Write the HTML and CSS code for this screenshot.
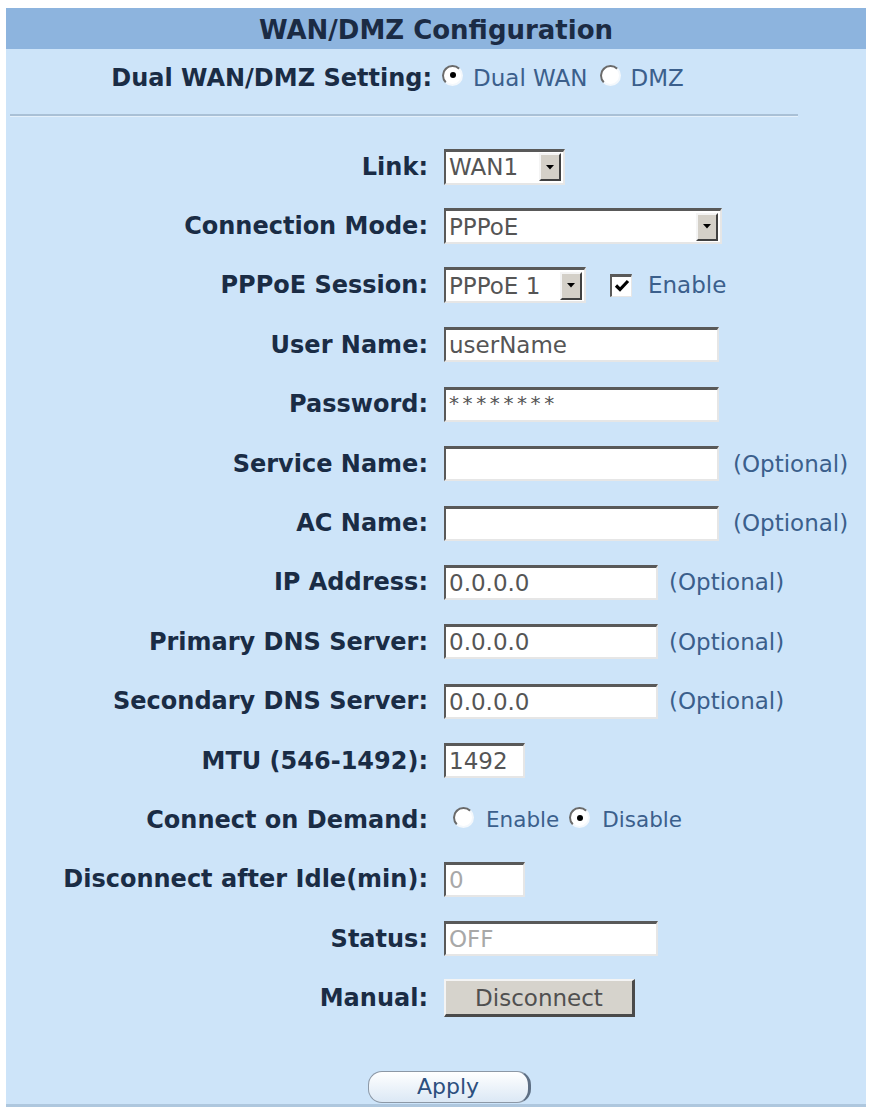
FILE: index.html
```html
<!DOCTYPE html>
<html>
<head>
<meta charset="utf-8">
<link rel="stylesheet" href="styles.css">
</head>
<body>
<div class="panel">
  <div class="title">WAN/DMZ Configuration</div>
  <div class="setting">
    <span class="slabel">Dual WAN/DMZ Setting:</span>
    <span class="radio checked"></span><span class="val">Dual WAN</span>
    <span class="radio"></span><span class="val">DMZ</span>
  </div>
  <div class="sep"></div>
  <div class="form">
    <div class="row"><div class="label">Link:</div><div class="ctrl">
      <div class="select w-link"><span class="stext">WAN1</span><span class="arrow"><svg width="8" height="5" viewBox="0 0 8 5"><path d="M0 0H8L4 4.5Z" fill="#000"/></svg></span></div>
    </div></div>
    <div class="row"><div class="label">Connection Mode:</div><div class="ctrl">
      <div class="select w-mode"><span class="stext">PPPoE</span><span class="arrow"><svg width="8" height="5" viewBox="0 0 8 5"><path d="M0 0H8L4 4.5Z" fill="#000"/></svg></span></div>
    </div></div>
    <div class="row"><div class="label">PPPoE Session:</div><div class="ctrl">
      <div class="select w-sess"><span class="stext">PPPoE 1</span><span class="arrow"><svg width="8" height="5" viewBox="0 0 8 5"><path d="M0 0H8L4 4.5Z" fill="#000"/></svg></span></div>
      <span class="check"><svg width="16" height="14" viewBox="0 0 16 14"><path d="M2 6.5L6 10.5L14 2" stroke="#000" stroke-width="3.2" fill="none"/></svg></span>
      <span class="val">Enable</span>
    </div></div>
    <div class="row"><div class="label">User Name:</div><div class="ctrl"><div class="input w-long">userName</div></div></div>
    <div class="row"><div class="label">Password:</div><div class="ctrl"><div class="input w-long pw">********</div></div></div>
    <div class="row"><div class="label">Service Name:</div><div class="ctrl"><div class="input w-long"></div><span class="val opt">(Optional)</span></div></div>
    <div class="row"><div class="label">AC Name:</div><div class="ctrl"><div class="input w-long"></div><span class="val opt">(Optional)</span></div></div>
    <div class="row"><div class="label">IP Address:</div><div class="ctrl"><div class="input w-mid">0.0.0.0</div><span class="val opt2">(Optional)</span></div></div>
    <div class="row"><div class="label">Primary DNS Server:</div><div class="ctrl"><div class="input w-mid">0.0.0.0</div><span class="val opt2">(Optional)</span></div></div>
    <div class="row"><div class="label">Secondary DNS Server:</div><div class="ctrl"><div class="input w-mid">0.0.0.0</div><span class="val opt2">(Optional)</span></div></div>
    <div class="row"><div class="label">MTU (546-1492):</div><div class="ctrl"><div class="input w-short">1492</div></div></div>
    <div class="row"><div class="label">Connect on Demand:</div><div class="ctrl radios">
      <span class="radio"></span><span class="val">Enable</span>
      <span class="radio checked"></span><span class="val">Disable</span>
    </div></div>
    <div class="row"><div class="label">Disconnect after Idle(min):</div><div class="ctrl"><div class="input w-short dis">0</div></div></div>
    <div class="row"><div class="label">Status:</div><div class="ctrl"><div class="input w-mid dis">OFF</div></div></div>
    <div class="row"><div class="label">Manual:</div><div class="ctrl"><button class="btn">Disconnect</button></div></div>
  </div>
  <div class="actions"><button class="apply">Apply</button></div>
</div>
</body>
</html>
```
FILE: styles.css
```css
html, body {
  margin: 0;
  padding: 0;
  background: #ffffff;
}
body {
  font-family: "DejaVu Sans", Verdana, sans-serif;
  padding: 8px 6px 0 6px;
}
.panel {
  width: 860px;
  background: #cde4f9;
  border-bottom: 3px solid #aec7de;
}
.title {
  height: 41px;
  line-height: 44px;
  background: #8db4de;
  text-align: center;
  font-weight: bold;
  font-size: 26px;
  color: #1b2b44;
}
.setting {
  height: 58px;
  display: flex;
  align-items: center;
}
.slabel {
  width: 426px;
  text-align: right;
  font-weight: bold;
  font-size: 24px;
  color: #1a2c45;
  margin-right: 10px;
  white-space: nowrap;
}
.val {
  font-size: 23px;
  color: #3b5f8c;
  white-space: nowrap;
}
.radio {
  box-sizing: border-box;
  width: 21px;
  height: 21px;
  border-radius: 50%;
  background: #ffffff;
  border: 2px solid;
  border-color: #6a6a6a #f4f8fc #f4f8fc #6a6a6a;
  display: inline-flex;
  align-items: center;
  justify-content: center;
  margin-right: 10px;
  position: relative;
  top: -3px;
  flex: none;
}
.radio.checked::after {
  content: "";
  width: 6px;
  height: 6px;
  border-radius: 50%;
  background: #000;
}
.setting .val { margin-right: 12px; }
.sep {
  margin: 7px 0 0 4px;
  width: 788px;
  height: 2px;
  background: #a9c0d6;
  border-bottom: 1px solid #e4f0fb;
}
.form {
  padding-top: 20px;
}
.row {
  height: 59.4px;
  display: flex;
  align-items: center;
}
.label {
  width: 422px;
  margin-right: 16px;
  text-align: right;
  font-weight: bold;
  font-size: 24px;
  color: #1a2c45;
  white-space: nowrap;
  flex: none;
}
.ctrl {
  display: flex;
  align-items: center;
}
.input, .select {
  box-sizing: border-box;
  height: 35px;
  background: #ffffff;
  border-top: 3px solid #595959;
  border-left: 2px solid #595959;
  border-right: 2px solid #e6e6e6;
  border-bottom: 2px solid #e6e6e6;
  font-size: 23px;
  color: #555;
  display: flex;
  align-items: center;
  padding-left: 3px;
  white-space: nowrap;
  overflow: hidden;
  flex: none;
}
.w-long { width: 275px; }
.w-mid { width: 214px; }
.w-short { width: 81px; }
.pw { font-size: 20px; letter-spacing: 3.6px; padding-bottom: 3px; }
.dis { color: #a8a8a8; }
.opt { margin-left: 14px; }
.opt2 { margin-left: 11px; }
.select {
  height: 36px;
  justify-content: space-between;
  padding-right: 2px;
}
.w-link { width: 121px; }
.w-mode { width: 278px; }
.w-sess { width: 142px; }
.arrow {
  box-sizing: border-box;
  width: 22px;
  height: 28px;
  background: #d4d0c8;
  border-top: 2px solid #f4f4f4;
  border-left: 2px solid #f4f4f4;
  border-right: 2px solid #404040;
  border-bottom: 2px solid #404040;
  display: flex;
  align-items: center;
  justify-content: center;
  flex: none;
}
.check {
  box-sizing: border-box;
  width: 22px;
  height: 23px;
  margin-left: 24px;
  margin-right: 16px;
  background: #fff;
  border-top: 3px solid #595959;
  border-left: 2px solid #595959;
  border-right: 1px solid #e6e6e6;
  border-bottom: 1px solid #e6e6e6;
  display: flex;
  align-items: center;
  justify-content: center;
  flex: none;
}
.radios .val { font-size: 21.5px; }
.radios .radio { margin-left: 9px; margin-right: 12px; top: -2px; }
.radios .val + .radio { margin-left: 10px; margin-right: 12px; }
.btn {
  box-sizing: border-box;
  width: 191px;
  height: 38px;
  background: #d6d3cc;
  border-top: 2px solid #f4f4f4;
  border-left: 2px solid #f4f4f4;
  border-right: 3px solid #4a4a4a;
  border-bottom: 3px solid #4a4a4a;
  font-family: "DejaVu Sans", Verdana, sans-serif;
  font-size: 23px;
  color: #505050;
  padding: 0;
}
.actions {
  height: 76px;
  display: flex;
  justify-content: center;
  align-items: flex-end;
  padding-bottom: 1px;
  box-sizing: border-box;
  padding-left: 26px;
}
.apply {
  width: 163px;
  height: 32px;
  border-radius: 14px;
  border: 1px solid #8c98a6;
  border-right: 3px solid #5e6f84;
  background: linear-gradient(#ffffff, #dbe8f5);
  font-family: "DejaVu Sans", Verdana, sans-serif;
  font-size: 22px;
  color: #2c4f7e;
  padding: 0;
}
```
